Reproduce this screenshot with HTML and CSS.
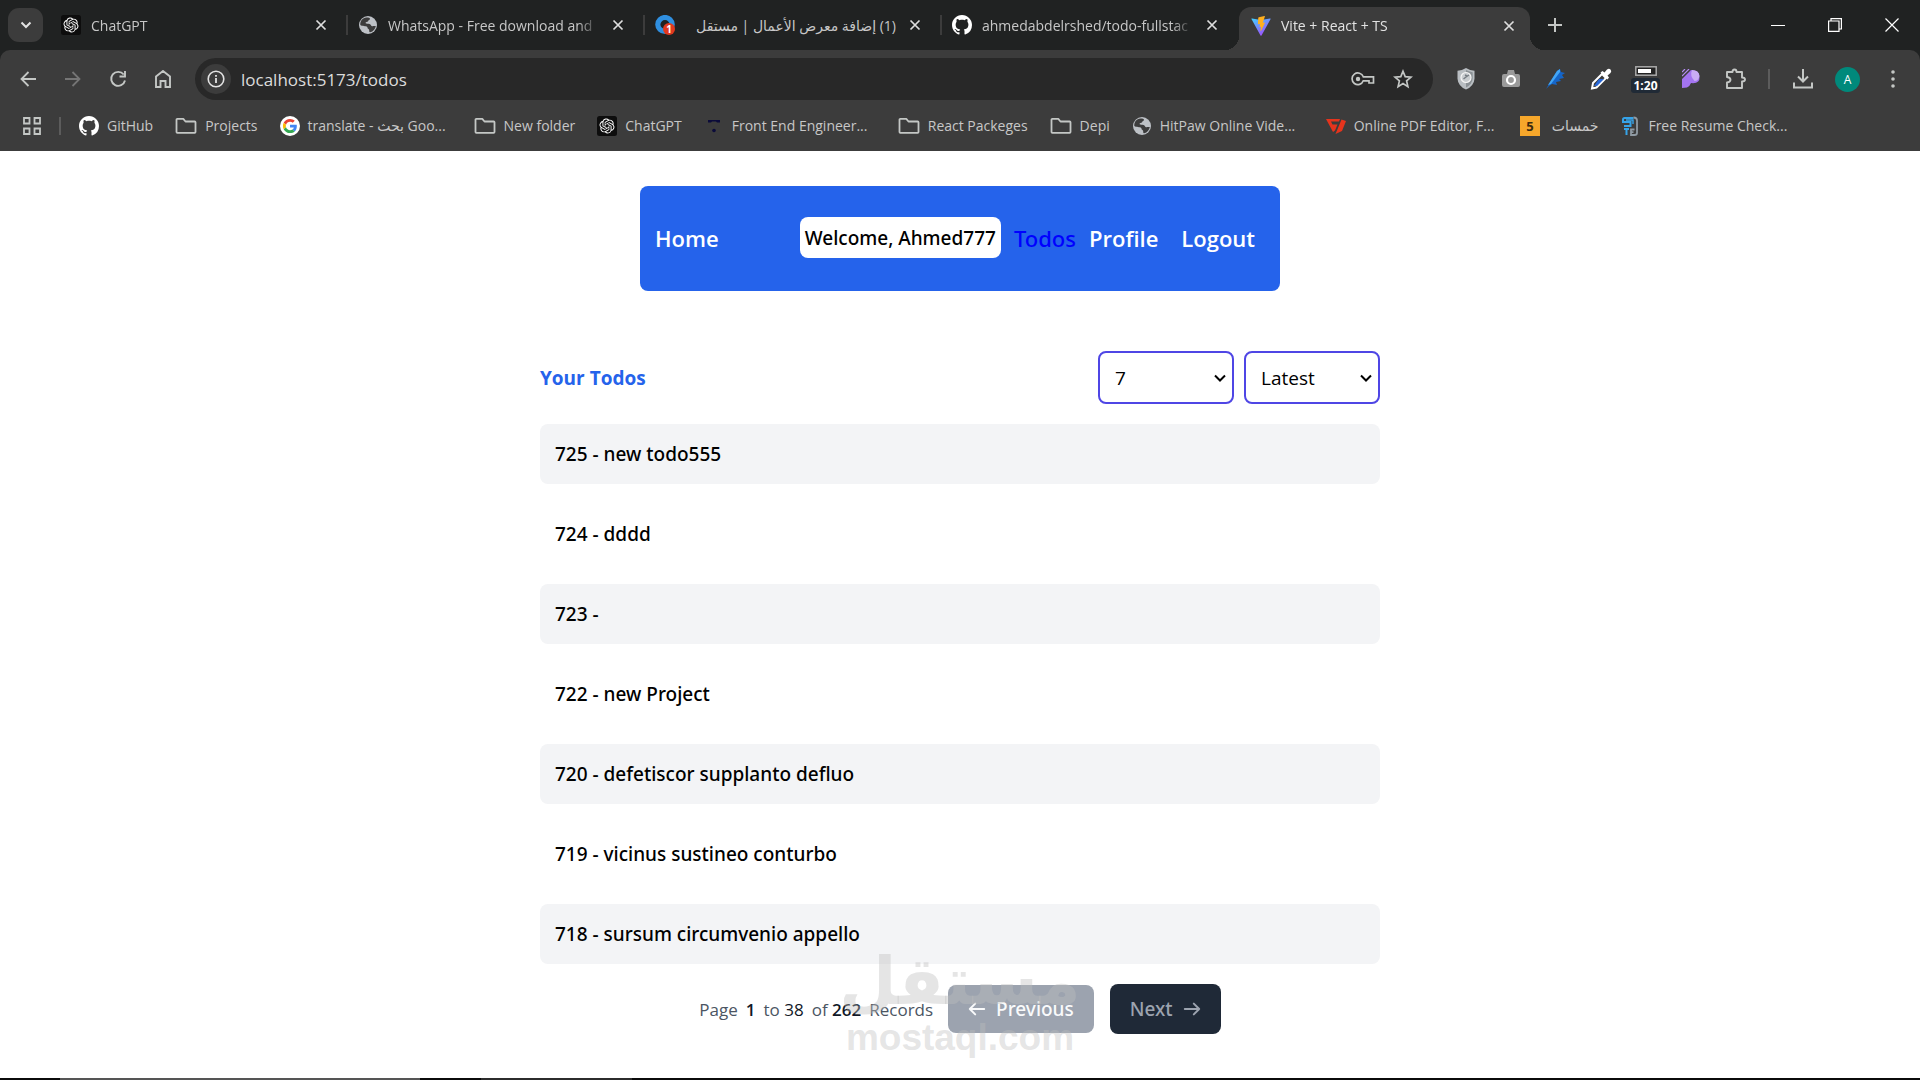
FILE: index.html
```html
<!DOCTYPE html>
<html lang="en">
<head>
<meta charset="utf-8">
<title>Vite + React + TS</title>
<link rel="stylesheet" href="styles.css">
</head>
<body>
<svg class="defs" width="0" height="0" aria-hidden="true">
  <defs>
    <symbol id="i-openai" viewBox="0 0 40 40"><rect width="40" height="40" rx="5" fill="#0d0d0d"/><g transform="translate(5 5) scale(1.25)"><path fill="#fff" d="M22.2819 9.8211a5.9847 5.9847 0 0 0-.5157-4.9108 6.0462 6.0462 0 0 0-6.5098-2.9A6.0651 6.0651 0 0 0 4.9807 4.1818a5.9847 5.9847 0 0 0-3.9977 2.9 6.0462 6.0462 0 0 0 .7427 7.0966 5.98 5.98 0 0 0 .511 4.9107 6.051 6.051 0 0 0 6.5146 2.9001A5.9847 5.9847 0 0 0 13.2599 24a6.0557 6.0557 0 0 0 5.7718-4.2058 5.9894 5.9894 0 0 0 3.9977-2.9001 6.0557 6.0557 0 0 0-.7475-7.0729zm-9.022 12.6081a4.4755 4.4755 0 0 1-2.8764-1.0408l.1419-.0804 4.7783-2.7582a.7948.7948 0 0 0 .3927-.6813v-6.7369l2.02 1.1686a.071.071 0 0 1 .038.052v5.5826a4.504 4.504 0 0 1-4.4945 4.4944zm-9.6607-4.1254a4.4708 4.4708 0 0 1-.5346-3.0137l.142.0852 4.783 2.7582a.7712.7712 0 0 0 .7806 0l5.8428-3.3685v2.3324a.0804.0804 0 0 1-.0332.0615L9.74 19.9502a4.4992 4.4992 0 0 1-6.1408-1.6464zM2.3408 7.8956a4.485 4.485 0 0 1 2.3655-1.9728V11.6a.7664.7664 0 0 0 .3879.6765l5.8144 3.3543-2.0201 1.1685a.0757.0757 0 0 1-.071 0l-4.8303-2.7865A4.504 4.504 0 0 1 2.3408 7.872zm16.5963 3.8558L13.1038 8.364 15.1192 7.2a.0757.0757 0 0 1 .071 0l4.8303 2.7913a4.4944 4.4944 0 0 1-.6765 8.1042v-5.6772a.79.79 0 0 0-.407-.667zm2.0107-3.0231l-.142-.0852-4.7735-2.7818a.7759.7759 0 0 0-.7854 0L9.409 9.2297V6.8974a.0662.0662 0 0 1 .0284-.0615l4.8303-2.7866a4.4992 4.4992 0 0 1 6.6802 4.66zM8.3065 12.863l-2.02-1.1638a.0804.0804 0 0 1-.038-.0567V6.0742a4.4992 4.4992 0 0 1 7.3757-3.4537l-.142.0805L8.704 5.459a.7948.7948 0 0 0-.3927.6813zm1.0976-2.3654l2.602-1.4998 2.6069 1.4998v2.9994l-2.5974 1.4997-2.6067-1.4997Z"/></g></symbol>
    <symbol id="i-github" viewBox="0 0 16 16"><path fill="#fff" d="M8 0C3.58 0 0 3.58 0 8c0 3.54 2.29 6.53 5.47 7.59.4.07.55-.17.55-.38 0-.19-.01-.82-.01-1.49-2.01.37-2.53-.49-2.69-.94-.09-.23-.48-.94-.82-1.13-.28-.15-.68-.52-.01-.53.63-.01 1.08.58 1.23.82.72 1.21 1.87.87 2.33.66.07-.52.28-.87.51-1.07-1.78-.2-3.64-.89-3.64-3.95 0-.87.31-1.59.82-2.15-.08-.2-.36-1.02.08-2.12 0 0 .67-.21 2.2.82.64-.18 1.32-.27 2-.27s1.36.09 2 .27c1.53-1.04 2.2-.82 2.2-.82.44 1.1.16 1.92.08 2.12.51.56.82 1.27.82 2.15 0 3.07-1.87 3.75-3.65 3.95.29.25.54.73.54 1.48 0 1.07-.01 1.93-.01 2.2 0 .21.15.46.55.38A8.01 8.01 0 0 0 16 8c0-4.42-3.58-8-8-8z"/></symbol>
    <symbol id="i-globe" viewBox="0 0 20 20"><circle cx="10" cy="10" r="9" fill="#bdc1c6"/><path fill="#3c3c3c" d="M8.500 2.500c2 0 3.500.3 3.500 1.300 0 1.200-1.500 1.100-1.800 2.100-.2.900-1.500.800-2.300 1.300-.8.500-.1 1.500 1.400 1.500 1.600 0 3.200.2 3.700 1.500.4 1.200 1.600 1 3 .8.900-.1 1.700-.2 1.800.2-.6 3-2.600 5.200-5.500 6-1.500.3-.9-1.500-1.200-2.400-.3-.9-1.500-.8-1.600-2-.1-1-.8-1.500-2.300-1.500-1.800 0-4-.4-4.900-1.200C2 6 4.500 2.800 8.500 2.500z"/></symbol>
    <symbol id="i-folder" viewBox="0 0 22 20"><path fill="none" stroke="#c4c7c5" stroke-width="1.800" stroke-linejoin="round" d="M1.500 3.500v12.500q0 .8.800.800h17.400q.8 0 .8-.8V6.300q0-.8-.8-.8H10.500L8.300 2.900H2.300q-.8 0-.8.800z"/></symbol>
    <symbol id="i-x" viewBox="0 0 12 12"><path fill="none" stroke="currentColor" stroke-width="1.700" d="M1.500 1.500l9 9m0-9l-9 9"/></symbol>
    <symbol id="i-arrow" viewBox="0 0 20 16"><path fill="none" stroke="currentColor" stroke-width="2.200" stroke-linecap="round" stroke-linejoin="round" d="M2 8h16M12 2l6 6-6 6"/></symbol>
  </defs>
</svg>

<header class="browser">
  <div class="tabstrip">
    <button class="tab-search" aria-label="Search tabs"><svg width="12" height="8" viewBox="0 0 12 8"><path fill="none" stroke="#e3e3e3" stroke-width="2" d="M1.500 1.500L6 6l4.500-4.500"/></svg></button>
    <div class="tab"><svg class="favicon"><use href="#i-openai"/></svg><span class="tab-title">ChatGPT</span><button class="tab-close" aria-label="Close tab"><svg><use href="#i-x"/></svg></button></div>
    <div class="tab"><svg class="favicon"><use href="#i-globe"/></svg><span class="tab-title">WhatsApp - Free download and</span><button class="tab-close" aria-label="Close tab"><svg><use href="#i-x"/></svg></button></div>
    <div class="tab">
      <svg class="favicon" viewBox="0 0 20 20"><ellipse cx="10" cy="9.500" rx="7.200" ry="7" fill="none" stroke="#2f8fe0" stroke-width="5.200"/><rect x="8" y="8" width="12" height="12" rx="6" fill="#e0391f"/><text x="14" y="18" text-anchor="middle" class="badge-number">1</text></svg>
      <span class="tab-title" dir="rtl">(1) إضافة معرض الأعمال | مستقل</span><button class="tab-close" aria-label="Close tab"><svg><use href="#i-x"/></svg></button></div>
    <div class="tab tab-before-active"><svg class="favicon"><use href="#i-github"/></svg><span class="tab-title">ahmedabdelrshed/todo-fullstac</span><button class="tab-close" aria-label="Close tab"><svg><use href="#i-x"/></svg></button></div>
    <div class="tab tab-active">
      <svg class="favicon" viewBox="0 0 20 20"><defs><linearGradient id="vite" x1="0" y1="0" x2=".6" y2="1"><stop offset="0" stop-color="#41d1ff"/><stop offset="1" stop-color="#a04dfe"/></linearGradient></defs><path fill="url(#vite)" d="M.6 3.200Q0 2.500 1 2.600L10 4l9-1.400q1-.1.500.7L10.500 19.400q-.5.700-1 0z"/><path fill="#ffb01f" d="M13.500 0L7.800 1.200q-.5.100-.5.600l-.4 6q0 .6.600.500l1.600-.3-.5 2.600q-.1.600.5.500l1-.3-.7 3.900 .6.300 3.900-8q.2-.5-.4-.5l-1.700.3 2.100-6.200q.1-.7-.4-.6z"/></svg>
      <span class="tab-title">Vite + React + TS</span><button class="tab-close" aria-label="Close tab"><svg><use href="#i-x"/></svg></button></div>
    <button class="new-tab" aria-label="New tab"><svg width="14" height="14" viewBox="0 0 14 14"><path stroke="#c4c7c5" stroke-width="2" d="M7 0v14M0 7h14"/></svg></button>
    <div class="window-controls">
      <button aria-label="Minimize"><svg width="14" height="14" viewBox="0 0 14 14"><path stroke="#fff" d="M0 7.500h14"/></svg></button>
      <button aria-label="Restore"><svg width="14" height="14" viewBox="0 0 14 14"><path fill="none" stroke="#fff" stroke-width="1.200" d="M.6 3h10.400v10.400H.6zM3 3V.6h10.400V11H11"/></svg></button>
      <button aria-label="Close window"><svg width="14" height="14" viewBox="0 0 14 14"><path stroke="#fff" stroke-width="1.200" d="M.5.500l13 13m0-13l-13 13"/></svg></button>
    </div>
  </div>

  <div class="toolbar">
    <button class="tool" aria-label="Back"><svg width="16" height="16" viewBox="0 0 16 16"><path fill="none" stroke="#c4c7c5" stroke-width="1.800" d="M16 8H1.500M8.500 1L1.500 8l7 7"/></svg></button>
    <button class="tool" aria-label="Forward"><svg width="16" height="16" viewBox="0 0 16 16"><path fill="none" stroke="#757575" stroke-width="1.800" d="M0 8h14.500M7.500 1l7 7-7 7"/></svg></button>
    <button class="tool" aria-label="Reload"><svg width="18" height="18" viewBox="0 0 18 18"><path fill="none" stroke="#c4c7c5" stroke-width="1.900" d="M14.700 4.500A7 7 0 1 0 16 10.500M16 1v5.500h-5.500"/></svg></button>
    <button class="tool" aria-label="Home"><svg width="16" height="18" viewBox="0 0 16 18"><path fill="none" stroke="#c4c7c5" stroke-width="1.900" d="M1 6.500L8 1l7 5.500V17h-4.500v-6h-5v6H1z"/></svg></button>
    <div class="omnibox">
      <button class="site-info" aria-label="Site information"><svg width="18" height="18" viewBox="0 0 18 18"><circle cx="9" cy="9" r="7.800" fill="none" stroke="#e3e3e3" stroke-width="1.600"/><path stroke="#e3e3e3" stroke-width="1.800" d="M9 8v5M9 5v1.800"/></svg></button>
      <input class="url" type="text" aria-label="Address" value="localhost:5173/todos">
      <button aria-label="Passwords"><svg width="24" height="14" viewBox="0 0 24 14"><path fill="none" stroke="#c4c7c5" stroke-width="1.700" d="M12.300 4.800H22.500V11H18V8.800h-5.700A5.800 5.800 0 1 1 12.300 4.800z"/><circle cx="7" cy="7" r="2.200" fill="#c4c7c5"/></svg></button>
      <button aria-label="Bookmark this tab"><svg width="20" height="20" viewBox="0 0 20 20"><path fill="none" stroke="#c4c7c5" stroke-width="1.700" d="M10 2.200l2.200 5.400 5.800.5-4.400 3.800 1.300 5.700L10 14.600l-4.900 3 1.300-5.700L2 8.100l5.800-.5z"/></svg></button>
    </div>
    <button class="tool" aria-label="Shield"><svg width="18" height="22" viewBox="0 0 18 22"><path fill="#b9bec2" d="M9 0q4 2.500 8.500 2.700v8Q17 18 9 21.500 1 18 .5 10.700v-8Q5 2.500 9 0z"/><path fill="#8b9195" d="M9 2q4 2 6.700 2.200v6.500Q15 16.500 9 19.500z"/><circle cx="9" cy="9.500" r="5" fill="#c9cdd0" stroke="#f5f5f5" stroke-width="1.200"/><path fill="none" stroke="#777e84" stroke-width="1.500" d="M6.500 11l2.500-2 3-2M8 7l2 1"/></svg></button>
    <button class="tool" aria-label="Screenshot"><svg width="20" height="20" viewBox="0 0 20 20"><path fill="#9a9a9a" d="M3 5h3l1-4h6l1 4h3q2 0 2 2v9q0 2-2 2H3q-2 0-2-2V7q0-2 2-2z"/><circle cx="10" cy="11" r="4" fill="#999" stroke="#fff" stroke-width="2.200"/></svg></button>
    <button class="tool" aria-label="Font finder"><svg width="22" height="20" viewBox="0 0 22 20"><path fill="#1565c8" d="M1 20L12 2l3-2 1 3 4 1-3 2 2 3-5 1 2 2-5 1 1 3-5-1-3 2z"/><path fill="#42a5f5" d="M3 16L12 2l3-2v3L6 15z"/></svg></button>
    <button class="tool" aria-label="Eyedropper"><svg width="22" height="22" viewBox="0 0 22 22"><path fill="none" stroke="#fff" stroke-width="2" d="M12 6l4 4-9.500 9.500L2 20.500 3 15z"/><path fill="#2868d8" d="M9 11h5l-7 7H4z"/><path fill="#fff" d="M10.500 4.500l2-1.500 2 1.500 2.500-3q2-1.500 3.500 0t0 3.500l-3 2.500 1.500 2-1.500 2z"/></svg></button>
    <button class="tool timer" aria-label="Timer"><svg width="22" height="10" viewBox="0 0 22 10"><rect x=".8" y=".8" width="20.400" height="8.400" fill="#222" stroke="#aaa" stroke-width="1.500"/><rect x="3" y="3" width="13" height="4" fill="#fff"/></svg><span class="timer-badge">1:20</span></button>
    <button class="tool" aria-label="Color tool"><svg width="18" height="20" viewBox="0 0 18 20"><path fill="#a374f0" d="M0 19V10L9 1q8 0 8.500 7T9 14q-1 3-4 4.500z"/><path fill="#c9acf5" d="M10 1q7 0 7.500 6-1 5-5 5-5-5-2.500-11z"/><path stroke="#b48cf2" stroke-width="1.200" d="M0 3l3-3M0 7l7-7"/></svg></button>
    <button class="tool" aria-label="Extensions"><svg width="22" height="22" viewBox="0 0 22 22"><path fill="none" stroke="#c4c7c5" stroke-width="1.900" stroke-linejoin="round" d="M2 4h5.500q0-2.500 2-2.500t2 2.500H17v5.500q3 0 3 2t-3 2V20H2v-5.500q3.500-.5 3.500-2.700T2 9z"/></svg></button>
    <span class="toolbar-sep"></span>
    <button class="tool" aria-label="Downloads"><svg width="20" height="20" viewBox="0 0 20 20"><path fill="none" stroke="#c4c7c5" stroke-width="2" d="M10 0v12M5 7.500l5 5 5-5M1 13.500V18.500h18v-5"/></svg></button>
    <button class="tool" aria-label="Profile"><span class="avatar">A</span></button>
    <button class="tool" aria-label="Menu"><svg width="4" height="18" viewBox="0 0 4 18"><g fill="#c4c7c5"><circle cx="2" cy="2" r="1.800"/><circle cx="2" cy="9" r="1.800"/><circle cx="2" cy="16" r="1.800"/></g></svg></button>
  </div>

  <nav class="bookmarks" aria-label="Bookmarks">
    <button class="apps" aria-label="Apps"><svg width="18" height="18" viewBox="0 0 18 18"><path fill="none" stroke="#c4c7c5" stroke-width="1.800" d="M1 1h5.500v5.500H1zM11.500 1H17v5.500h-5.500zM1 11.500h5.500V17H1zM11.500 11.500H17V17h-5.500z"/></svg></button>
    <span class="bookmark-sep"></span>
    <a class="bookmark" href="#"><svg class="favicon"><use href="#i-github"/></svg><span>GitHub</span></a>
    <a class="bookmark" href="#"><svg class="folder"><use href="#i-folder"/></svg><span>Projects</span></a>
    <a class="bookmark bookmark-long" href="#"><svg class="favicon" viewBox="0 0 48 48"><circle cx="24" cy="24" r="24" fill="#fff"/><g transform="translate(7 7) scale(.71)"><path fill="#EA4335" d="M24 9.500c3.540 0 6.710 1.220 9.210 3.600l6.850-6.850C35.900 2.380 30.470 0 24 0 14.620 0 6.510 5.380 2.560 13.220l7.980 6.190C12.430 13.720 17.740 9.500 24 9.500z"/><path fill="#4285F4" d="M46.980 24.550c0-1.570-.15-3.090-.38-4.550H24v9.020h12.940c-.58 2.960-2.260 5.480-4.780 7.180l7.730 6c4.510-4.180 7.090-10.360 7.090-17.650z"/><path fill="#FBBC05" d="M10.530 28.590c-.48-1.450-.76-2.990-.76-4.590s.27-3.140.76-4.590l-7.980-6.190C.92 16.460 0 20.120 0 24c0 3.880.92 7.540 2.560 10.780l7.970-6.190z"/><path fill="#34A853" d="M24 48c6.480 0 11.930-2.130 15.890-5.810l-7.730-6c-2.150 1.450-4.920 2.300-8.160 2.300-6.260 0-11.570-4.220-13.470-9.910l-7.980 6.190C6.510 42.620 14.620 48 24 48z"/></g></svg><span>translate - بحث Goo...</span></a>
    <a class="bookmark" href="#"><svg class="folder"><use href="#i-folder"/></svg><span>New folder</span></a>
    <a class="bookmark" href="#"><svg class="favicon"><use href="#i-openai"/></svg><span>ChatGPT</span></a>
    <a class="bookmark bookmark-long" href="#"><svg class="favicon" viewBox="0 0 20 20"><path fill="#0b0b3a" d="M4 4h12v2.500h-3l-1-1H8l-1 1H4z"/><circle cx="10" cy="14.500" r="1.800" fill="#0b0b3a"/></svg><span>Front End Engineer...</span></a>
    <a class="bookmark" href="#"><svg class="folder"><use href="#i-folder"/></svg><span>React Packeges</span></a>
    <a class="bookmark" href="#"><svg class="folder"><use href="#i-folder"/></svg><span>Depi</span></a>
    <a class="bookmark bookmark-long" href="#"><svg class="favicon"><use href="#i-globe"/></svg><span>HitPaw Online Vide...</span></a>
    <a class="bookmark bookmark-long" href="#"><svg class="favicon" viewBox="0 0 20 20"><path fill="#e5341d" d="M0 3h14l-1 2.500H5l1.500 3h5L9 14.500 7 16zM15.500 3.500L20 5l-4 10-6.500 3z"/></svg><span>Online PDF Editor, F...</span></a>
    <a class="bookmark" href="#"><svg class="favicon" viewBox="0 0 20 20"><rect width="20" height="20" fill="#f6a72b"/><text x="10" y="15" text-anchor="middle" class="khamsat-number">5</text></svg><span class="bookmark-rtl" lang="ar" dir="rtl">خمسات</span></a>
    <a class="bookmark bookmark-long" href="#"><svg class="favicon" viewBox="0 0 20 20"><path fill="none" stroke="#36a3e8" stroke-width="2" d="M13.500 2H4.500Q3 2 3 3.500V6h7.500v4H4M4 13h5M6.500 13v6"/><path fill="none" stroke="#36a3e8" stroke-width="1.400" d="M6 4h7v4"/><path fill="none" stroke="#8f9aa3" stroke-width="1.800" d="M13.500 1.500q3.500 0 3.500 3V17q0 2-2.500 2H11v-5.500h3.500M11 16.200h2.500"/></svg><span>Free Resume Check...</span></a>
  </nav>
</header>

<main class="app">
  <nav class="navbar" aria-label="Main">
    <a class="nav-link" href="#">Home</a>
    <div class="nav-group">
      <span class="welcome">Welcome, Ahmed777</span>
      <a class="nav-link nav-current" href="#">Todos</a>
      <a class="nav-link" href="#">Profile</a>
      <button class="nav-link logout">Logout</button>
    </div>
  </nav>

  <section class="todos">
    <div class="todos-header">
      <h1>Your Todos</h1>
      <div class="filters">
        <select aria-label="Page size"><option>7</option><option>10</option></select>
        <select aria-label="Sort order"><option>Latest</option><option>Oldest</option></select>
      </div>
    </div>
    <ul class="todo-list">
      <li>725 - new todo555</li>
      <li>724 - dddd</li>
      <li>723 -</li>
      <li>722 - new Project</li>
      <li>720 - defetiscor supplanto defluo</li>
      <li>719 - vicinus sustineo conturbo</li>
      <li>718 - sursum circumvenio appello</li>
    </ul>
    <div class="pager">
      <p class="page-info"><span>Page</span><b>1</b><span>to <em>38</em></span><span>of <b>262</b></span><span>Records</span></p>
      <div class="pager-buttons">
        <button class="previous" disabled><svg class="flip" width="18" height="16"><use href="#i-arrow"/></svg>Previous</button>
        <button class="next">Next<svg width="18" height="16"><use href="#i-arrow"/></svg></button>
      </div>
      <div class="watermark" aria-hidden="true"><span class="watermark-ar" lang="ar">مستقل</span><span class="watermark-en">mostaql.com</span></div>
    </div>
  </section>
</main>
<footer class="taskbar"><span class="task task-active"></span><span class="task"></span></footer>
</body>
</html>
```
FILE: styles.css
```css
* { box-sizing: border-box; margin: 0; padding: 0; }

body {
  display: flex;
  flex-direction: column;
  min-height: 100vh;
  background: #fff;
  color: #000;
  font-family: "Open Sans", "Noto Sans", "DejaVu Sans", sans-serif;
}

button { border: 0; background: none; color: inherit; font: inherit; }
a { color: inherit; text-decoration: none; }
svg { display: block; flex: none; }
.defs { position: absolute; }

/* Browser frame */
.browser { background: #202222; color: #c7c7c7; font-size: 14px; }

.tabstrip { display: flex; align-items: center; height: 50px; padding-left: 8px; }
.tab-search {
  display: grid;
  place-items: center;
  width: 35px;
  height: 34px;
  margin-right: 8px;
  border-radius: 11px;
  background: #3c3c3c;
}
.tab {
  display: flex;
  align-items: center;
  flex: 0 1 297px;
  gap: 10px;
  min-width: 0;
  height: 20px;
  padding: 0 16px 0 10px;
  border-right: 2px solid #3c3c3c;
}
.tab-before-active { border-color: transparent; }
.favicon { width: 20px; height: 20px; }
.folder { width: 22px; height: 20px; }
.tab-title {
  flex: 1;
  overflow: hidden;
  white-space: nowrap;
  mask-image: linear-gradient(to right, #000 90%, transparent);
}
.tab-title[dir="rtl"] { mask-image: none; }
.tab-close { padding: 3px; }
.tab-close svg { width: 12px; height: 12px; color: #dedede; }
.tab-active {
  position: relative;
  flex-basis: 291px;
  height: 43px;
  margin-top: 7px;
  padding: 0 12px 6px;
  border: 0;
  border-radius: 12px 12px 0 0;
  background: #3c3c3c;
  color: #e3e3e3;
}
.tab-active::before,
.tab-active::after {
  content: "";
  position: absolute;
  bottom: 0;
  width: 14px;
  height: 14px;
}
.tab-active::before { right: 100%; background: radial-gradient(circle at 0 0, transparent 14px, #3c3c3c 14px); }
.tab-active::after { left: 100%; background: radial-gradient(circle at 100% 0, transparent 14px, #3c3c3c 14px); }
.new-tab { padding: 10px; margin-left: 8px; }
.window-controls { display: flex; margin-left: auto; }
.window-controls button { display: grid; place-items: center; width: 57px; height: 50px; }
.badge-number { fill: #fff; font-size: 10px; font-weight: 700; }

.toolbar {
  display: flex;
  align-items: center;
  height: 58px;
  padding: 0 5px;
  border-radius: 10px 10px 0 0;
  background: #3c3c3c;
}
.tool { display: grid; place-items: center; width: 45px; height: 42px; }
.omnibox {
  display: flex;
  align-items: center;
  flex: 1;
  height: 42px;
  margin: 0 10px;
  padding: 0 10px 0 6px;
  border-radius: 21px;
  background: #282828;
}
.omnibox button { display: grid; place-items: center; width: 40px; height: 30px; }
.omnibox .site-info { width: 30px; border-radius: 15px; background: #3c3c3c; }
.url {
  flex: 1;
  padding: 0 10px;
  border: 0;
  background: none;
  color: #dcdcdc;
  font: 17px "Open Sans", sans-serif;
}
.timer { align-content: center; gap: 2px; }
.timer-badge {
  padding: 0 2px;
  border-radius: 3px;
  background: #202a36;
  color: #fff;
  font-size: 12px;
  font-weight: 700;
  line-height: 15px;
}
.toolbar-sep { width: 2px; height: 20px; margin: 0 10px; background: #5c5c5c; }
.avatar {
  display: grid;
  place-items: center;
  width: 25px;
  height: 25px;
  border-radius: 50%;
  background: #00897b;
  color: #fff;
  font-size: 12px;
}

.bookmarks {
  display: flex;
  align-items: center;
  gap: 22px;
  height: 43px;
  padding: 0 23px 8px;
  background: #3c3c3c;
  white-space: nowrap;
  overflow: hidden;
}
.bookmark-sep { width: 2px; height: 18px; margin: 0 -4px; background: #5c5c5c; }
.bookmark { display: flex; align-items: center; gap: 8px; }
.bookmark-long span { width: 144px; }
.bookmark-rtl { padding-left: 4px; }
.khamsat-number { fill: #3a2a10; font-size: 13px; font-weight: 700; }

/* Application */
.app {
  flex: 1;
  display: flex;
  flex-direction: column;
  align-items: center;
  gap: 60px;
  padding: 35px 20px 0;
  font-size: 19px;
}
.navbar {
  display: flex;
  align-items: center;
  justify-content: space-between;
  width: 100%;
  max-width: 640px;
  height: 105px;
  padding: 0 15px 2px;
  border-radius: 8px;
  background: #2563eb;
  color: #fff;
}
.nav-group { display: flex; align-items: center; gap: 13px; }
.nav-link { font-size: 22px; font-weight: 600; }
.nav-current { color: #00f; font-family: "Noto Sans", sans-serif; font-weight: 500; }
.logout { padding: 0 10px; }
.welcome {
  padding: 1px 5px 0;
  border-radius: 8px;
  background: #fff;
  color: #000;
  font-family: "Noto Sans", sans-serif;
  font-weight: 500;
  line-height: 40px;
}

.todos { width: 100%; max-width: 840px; }
.todos-header { display: flex; align-items: center; justify-content: space-between; }
.todos-header h1 { color: #2563eb; font-size: 19px; font-weight: 700; }
.filters { display: flex; gap: 10px; }
.filters select {
  appearance: none;
  width: 136px;
  height: 53px;
  padding: 0 15px;
  border: 2px solid #4f46e5;
  border-radius: 8px;
  background: #fff url("data:image/svg+xml,%3Csvg xmlns='http://www.w3.org/2000/svg' width='12' height='8'%3E%3Cpath fill='none' stroke='%23000' stroke-width='2' d='M1 1.500l5 5 5-5'/%3E%3C/svg%3E") no-repeat right 6px center;
  color: #000;
  font: 19px "Open Sans", sans-serif;
}

.todo-list { display: grid; gap: 20px; margin: 20px 0; list-style: none; }
.todo-list li {
  padding: 1px 15px 0;
  border-radius: 8px;
  font-family: "Noto Sans", sans-serif;
  font-weight: 500;
  line-height: 59px;
}
.todo-list li:nth-child(odd) { background: #f3f4f6; }

.pager {
  position: relative;
  display: flex;
  align-items: center;
  justify-content: center;
  gap: 15px;
  height: 50px;
}
.page-info { display: flex; gap: 8px; color: #4b5563; font-size: 17px; }
.page-info b { color: #111827; font-weight: 600; }
.page-info em { color: #111827; font-style: normal; }
.pager-buttons { display: flex; align-items: center; gap: 16px; }
.pager-buttons button {
  display: flex;
  align-items: center;
  gap: 10px;
  height: 50px;
  padding: 0 20px;
  border-radius: 8px;
  background: #1f2937;
  color: #9ca3af;
  font-family: "Noto Sans", sans-serif;
  font-weight: 500;
}
.pager-buttons .previous { height: 48px; background: #9ca3af; color: #f9fafb; }
.flip { transform: scaleX(-1); }

.watermark {
  position: absolute;
  top: -50px;
  left: 50%;
  display: flex;
  flex-direction: column;
  align-items: center;
  width: 230px;
  margin-left: -115px;
  color: rgba(190, 190, 190, .4);
  font-weight: 700;
  pointer-events: none;
}
.watermark-ar { font-family: "DejaVu Sans", sans-serif; font-size: 66px; line-height: 96px; }
.watermark-en { margin-top: -12px; font-family: "Liberation Sans", sans-serif; font-size: 37px; line-height: 40px; }

.taskbar { display: flex; height: 2px; padding-left: 60px; gap: 61px; background: #0b0b0b; }
.task { width: 151px; background: #2c2c2c; }
.task-active { width: 360px; background: #555; }
```
